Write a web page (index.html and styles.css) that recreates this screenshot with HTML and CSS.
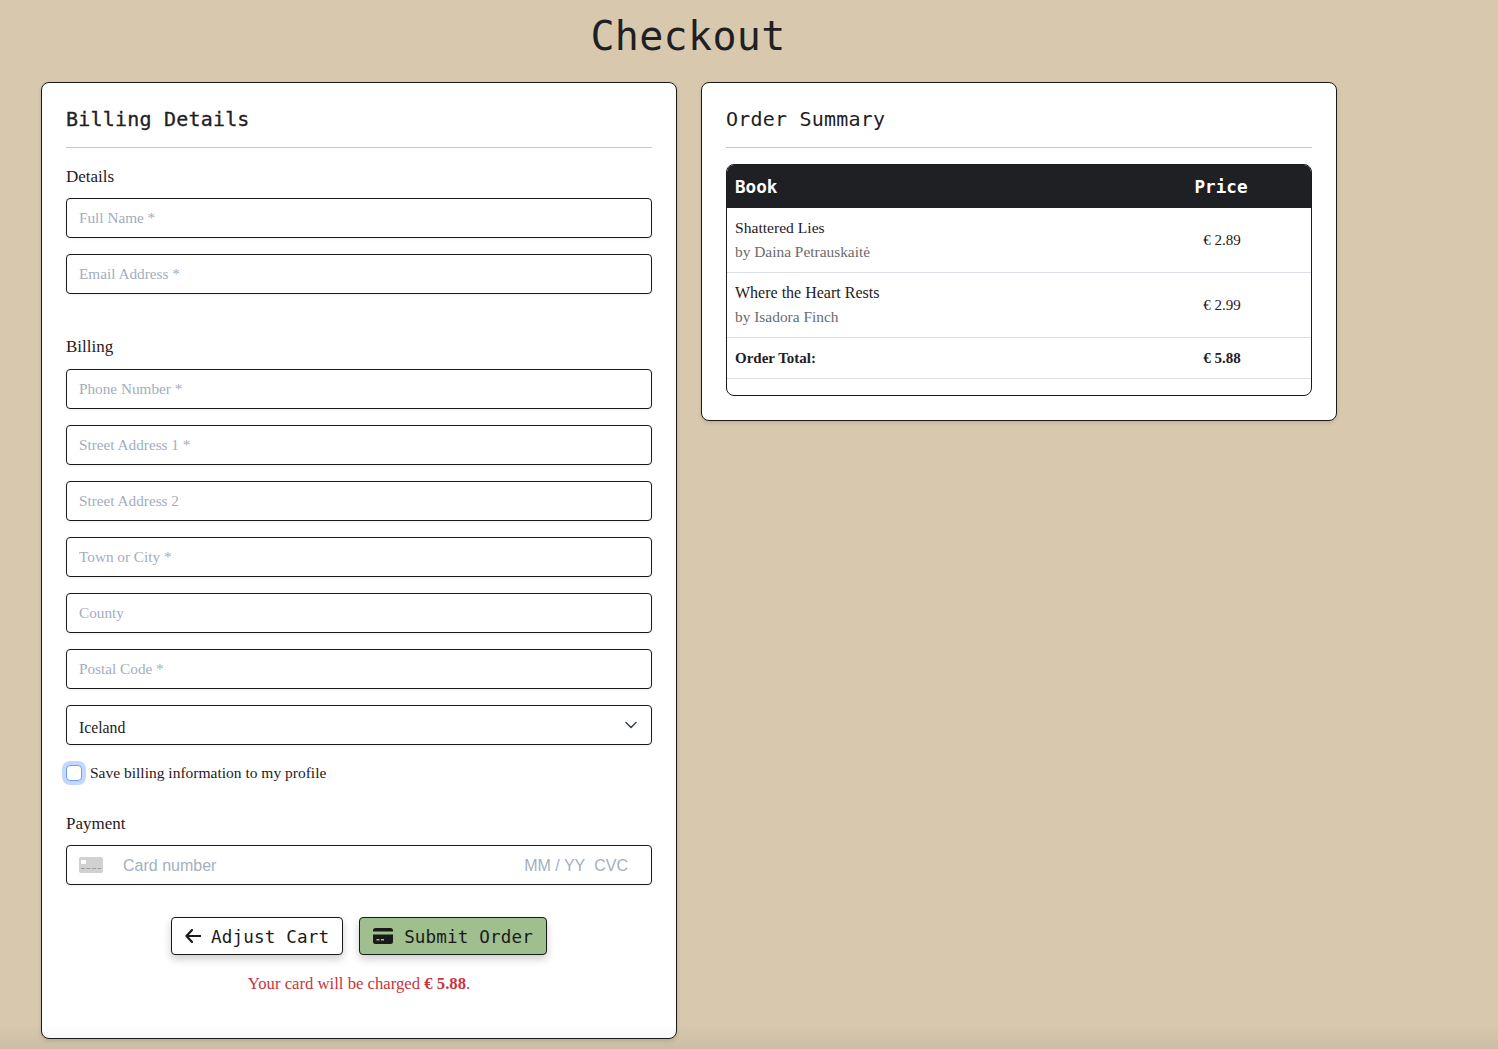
FILE: index.html
```html
<!DOCTYPE html>
<html lang="en">
<head>
<meta charset="utf-8">
<title>Checkout</title>
<link rel="stylesheet" href="styles.css">
</head>
<body>
<h1 class="page-title">Checkout</h1>
<main class="columns">
  <section class="card">
    <h2 class="card-title">Billing Details</h2>
    <hr class="rule">
    <form class="form">
      <div class="group">
        <div class="group-label">Details</div>
        <input class="field" placeholder="Full Name *">
        <input class="field" placeholder="Email Address *">
      </div>
      <div class="group group-billing">
        <div class="group-label">Billing</div>
        <input class="field" placeholder="Phone Number *">
        <input class="field" placeholder="Street Address 1 *">
        <input class="field" placeholder="Street Address 2">
        <input class="field" placeholder="Town or City *">
        <input class="field" placeholder="County">
        <input class="field" placeholder="Postal Code *">
        <div class="select-wrap">
          <select class="field select"><option>Iceland</option></select>
          <svg class="chevron" width="12" height="8" viewBox="0 0 12 8" fill="none"><path d="M1 1.5l5 5 5-5" stroke="#374151" stroke-width="1.5" stroke-linecap="round" stroke-linejoin="round"/></svg>
        </div>
      </div>
      <label class="save-row">
        <input type="checkbox" class="check">
        <span>Save billing information to my profile</span>
      </label>
      <div class="group group-payment">
        <div class="group-label">Payment</div>
        <div class="field card-field">
          <svg class="card-icon" width="24" height="16" viewBox="0 0 24 16"><rect width="24" height="16" rx="2" fill="#d1d1d1"/><rect x="2" y="3" width="5" height="4" rx=".5" fill="#fff"/><path d="M2 11.5h4M7.5 11.5h4M13 11.5h4M18.500 11.500h3.500" stroke="#9d9d9d" stroke-width="1.200"/></svg>
          <span class="card-number">Card number</span>
          <span class="card-exp">MM / YY</span>
          <span class="card-cvc">CVC</span>
        </div>
      </div>
      <div class="actions">
        <button type="button" class="btn">
          <svg width="16" height="14" viewBox="0 0 16 14" fill="none"><path d="M7 1L1.500 7 7 13M2 7h13.500" stroke="#1a1a1a" stroke-width="2.200" stroke-linecap="round" stroke-linejoin="round"/></svg>
          <span class="btn-text">Adjust Cart</span>
        </button>
        <button type="button" class="btn btn-submit">
          <svg width="20" height="16" viewBox="0 0 20 16"><path fill-rule="evenodd" fill="#1a1a1a" d="M2.500 0h15A2.500 2.500 0 0 1 20 2.500V3.500H0V2.500A2.500 2.500 0 0 1 2.500 0zM0 6.500h20v7a2.500 2.500 0 0 1-2.500 2.500h-15A2.500 2.500 0 0 1 0 13.500zM3.500 11v1.500h3V11zM8 11v1.500h3V11z"/></svg>
          <span class="btn-text">Submit Order</span>
        </button>
      </div>
      <p class="charge">Your card will be charged <strong>€ 5.88</strong>.</p>
    </form>
  </section>
  <section class="card card-summary">
    <h2 class="card-title card-title-light">Order Summary</h2>
    <hr class="rule">
    <div class="table-wrap">
      <table class="table">
        <thead>
          <tr><th class="col-book">Book</th><th class="col-price">Price</th></tr>
        </thead>
        <tbody>
          <tr class="item item-first">
            <td><div class="book-name">Shattered Lies</div><div class="book-author">by Daina Petrauskaitė</div></td>
            <td class="price">€ 2.89</td>
          </tr>
          <tr class="item">
            <td><div class="book-name book-name-long">Where the Heart Rests</div><div class="book-author">by Isadora Finch</div></td>
            <td class="price">€ 2.99</td>
          </tr>
          <tr class="total">
            <td>Order Total:</td>
            <td class="price">€ 5.88</td>
          </tr>
        </tbody>
      </table>
    </div>
  </section>
</main>
<div class="bottom-fade"></div>
</body>
</html>
```
FILE: styles.css
```css
* { box-sizing: border-box; }
html, body { margin: 0; padding: 0; }
body {
  background: #d8c9ae;
  color: #1f2024;
  font-family: "Liberation Serif", serif;
  font-size: 16px;
  height: 1049px;
  overflow: hidden;
}
.page-title {
  margin: 0;
  width: 1376px;
  height: 82px;
  padding-top: 12px;
  text-align: center;
  font-family: "DejaVu Sans Mono", monospace;
  font-weight: 400;
  font-size: 40px;
  line-height: 48px;
  letter-spacing: .3px;
}
.columns {
  display: flex;
  align-items: flex-start;
  gap: 24px;
  margin-left: 41px;
  width: 1296px;
}
.card {
  flex: 1 1 0;
  height: 957px;
  padding: 24px;
  background: #fff;
  border: 1px solid #1a1a1a;
  border-radius: 8px;
  box-shadow: 0 2px 4px rgba(0,0,0,.12);
}
.card-summary { height: 339px; }
.card-title {
  margin: 0;
  height: 28px;
  font-family: "DejaVu Sans Mono", monospace;
  font-size: 20px;
  line-height: 24px;
  font-weight: 400;
  letter-spacing: .2px;
  -webkit-text-stroke: .3px #1f2024;
}
.card-title-light { -webkit-text-stroke: 0; }
.rule {
  border: 0;
  border-top: 1px solid #c9c9c9;
  margin: 12px 0 0;
}
.form { display: flex; flex-direction: column; }
.group { display: flex; flex-direction: column; gap: 16px; }
.group-label { height: 22px; margin: 18px 0 -6px; line-height: 22px; font-size: 17px; }
.group-billing { margin-top: 24px; }
.group-billing .group-label { margin: 18px 0 -5px; }
.group-payment { margin-top: 16px; }
.group-payment .group-label { margin: 12px 0 -6px; }
.field {
  display: block;
  width: 100%;
  height: 40px;
  padding: 0 12px;
  background: #fff;
  border: 1px solid #1a1a1a;
  border-radius: 4px;
  font-family: "Liberation Serif", serif;
  font-size: 15.25px;
  color: #1f2024;
  box-shadow: 0 1px 3px rgba(0,0,0,.06);
  outline: none;
}
.field::placeholder { color: #a3adbd; opacity: 1; }
.select-wrap { position: relative; }
.select { appearance: none; padding-top: 4px; font-size: 15.75px; }
.chevron { position: absolute; right: 15px; top: 16px; }
.save-row {
  display: flex;
  align-items: center;
  gap: 8px;
  height: 24px;
  margin-top: 16px;
  font-size: 15.5px;
}
.check {
  appearance: none;
  width: 16px;
  height: 16px;
  margin: 0;
  background: #fff;
  border: 1px solid #6f9ef8;
  border-radius: 4px;
  box-shadow: 0 0 0 4px #c4d7fd;
}
.card-field {
  display: flex;
  align-items: center;
  font-family: "Liberation Sans", sans-serif;
  color: #a3b0c0;
  font-size: 16px;
}
.card-icon { flex: none; }
.card-number { margin-left: 20px; flex: 1; padding-top: 2px; }
.card-exp { margin-right: 9px; padding-top: 2px; }
.card-cvc { margin-right: 11px; padding-top: 2px; }
.actions {
  display: flex;
  justify-content: center;
  gap: 16px;
  margin-top: 32px;
}
.btn {
  display: flex;
  align-items: center;
  gap: 10px;
  height: 38px;
  padding: 0 13px;
  background: #fff;
  border: 1px solid #1a1a1a;
  border-radius: 4px;
  font-family: "DejaVu Sans Mono", monospace;
  font-size: 17.6px;
  letter-spacing: .15px;
  color: #1a1a1a;
  box-shadow: 0 4px 8px rgba(0,0,0,.2);
}
.btn-text { padding-top: 2px; }
.btn-submit { background: #a0bf8e; gap: 11px; }
.charge {
  margin: 17px 0 0;
  text-align: center;
  font-size: 16.7px;
  line-height: 24px;
  color: #c9343c;
}
.table-wrap {
  margin-top: 16px;
  height: 232px;
  border: 1px solid #1a1a1a;
  border-radius: 8px;
  overflow: hidden;
}
.table { width: 100%; border-collapse: collapse; table-layout: fixed; }
.table th {
  height: 43px;
  background: #1f2024;
  color: #fff;
  font-family: "DejaVu Sans Mono", monospace;
  font-size: 17.6px;
  font-weight: 700;
}
.col-book { text-align: left; padding: 0 8px; }
.col-price { width: 180px; text-align: center; }
.table td { padding: 0 8px; border-bottom: 1px solid #dcdfe4; font-size: 15px; }
.item td { height: 65px; }
.item-first td { height: 64px; }
.total td { height: 41px; font-weight: 700; padding-top: 1px; }
.book-name { line-height: 24px; font-size: 15.6px; }
.book-name-long { font-size: 16px; }
.book-author { line-height: 24px; font-size: 15.4px; color: #6b6b6b; }
.table .price { text-align: center; padding: 2px 7px 0 9px; }
.bottom-fade {
  position: fixed;
  left: 0;
  right: 0;
  bottom: 0;
  height: 24px;
  background: linear-gradient(to bottom, rgba(0,0,0,0), rgba(0,0,0,.06));
  pointer-events: none;
}
```
